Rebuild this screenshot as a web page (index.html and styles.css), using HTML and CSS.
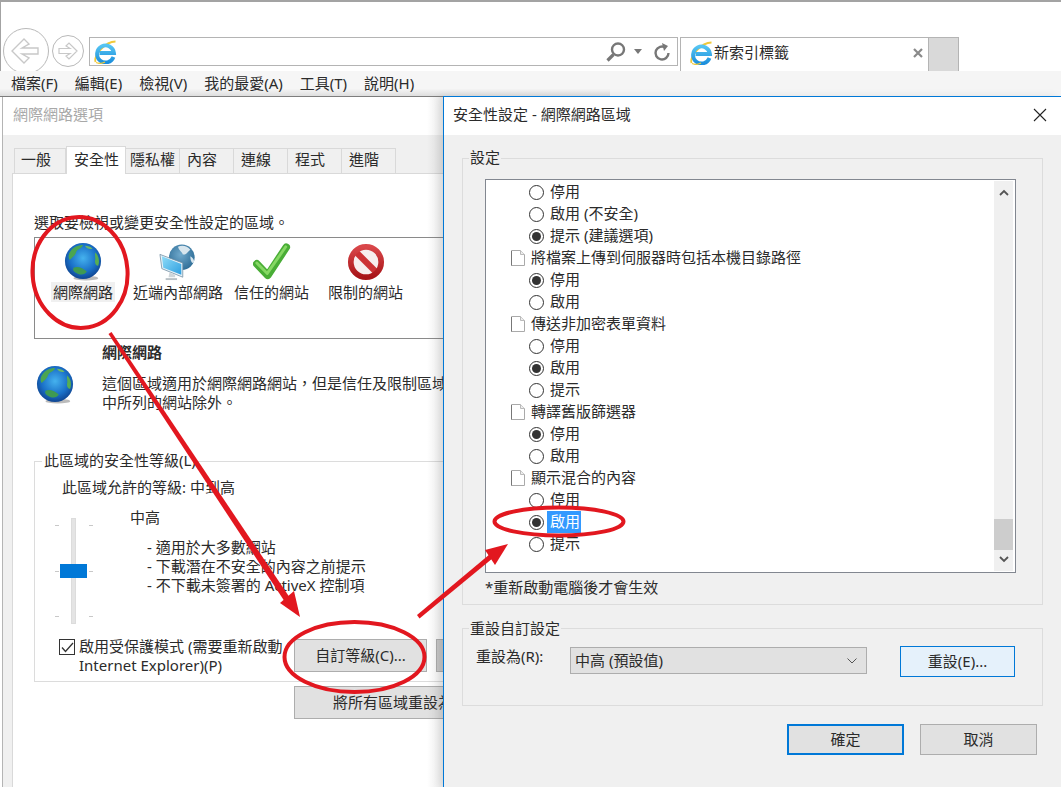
FILE: index.html
```html
<!DOCTYPE html>
<html lang="zh-Hant">
<head>
  <meta charset="UTF-8">
  <title>網際網路選項</title>
  <link rel="stylesheet" href="styles.css">
</head>
<body>
  <svg class="defs" width="0" height="0">
    <defs>
      <radialGradient id="sea" cx="0.5" cy="0.42" r="0.62">
        <stop offset="0" stop-color="#45b2ee"/>
        <stop offset="0.6" stop-color="#1a70c8"/>
        <stop offset="1" stop-color="#0d3c86"/>
      </radialGradient>
      <radialGradient id="sea2" cx="0.45" cy="0.4" r="0.65">
        <stop offset="0" stop-color="#6fa9cc"/>
        <stop offset="1" stop-color="#2b6a94"/>
      </radialGradient>
      <linearGradient id="ie" x1="0" y1="0" x2="0" y2="1">
        <stop offset="0" stop-color="#55c4f2"/>
        <stop offset="1" stop-color="#1c8fdc"/>
      </linearGradient>
      <linearGradient id="screen" x1="0" y1="0" x2="1" y2="1">
        <stop offset="0" stop-color="#8fdcf8"/>
        <stop offset="1" stop-color="#2e9fe0"/>
      </linearGradient>
      <linearGradient id="ring" x1="0" y1="0" x2="0" y2="1">
        <stop offset="0" stop-color="#d9474a"/>
        <stop offset="1" stop-color="#a81418"/>
      </linearGradient>
      <symbol id="ico-ie" viewBox="0 0 24 24">
        <path d="M2.500 22C.5 16 12 1.500 22.500 1.500" fill="none" stroke="#f0c93a" stroke-width="1.800"/>
        <path d="M20.500 17A8.500 8.500 0 1 1 21 13H6.500" fill="none" stroke="url(#ie)" stroke-width="3.800"/>
        <path d="M3 22.500C6 24 9 23.500 12 22" fill="none" stroke="#f0c93a" stroke-width="1.300"/>
      </symbol>
      <symbol id="ico-globe" viewBox="0 0 40 40">
        <ellipse cx="23" cy="37" rx="13" ry="2.500" fill="#bbb"/>
        <circle cx="20" cy="19" r="19" fill="url(#sea)"/>
        <path d="M6 10C9 4 15 2 20 2C19 6 14 6 13 9C12 13 9 15 6 18C4 15 5 12 6 10Z" fill="#4ba551"/>
        <path d="M33 10C36 13 38 18 36 24C33 24 32 20 33 17C33 14 32 12 33 10Z" fill="#57ad53"/>
        <path d="M10 26C14 24 20 26 24 30C22 34 16 34 12 31C10 30 9 28 10 26Z" fill="#3f9a52"/>
        <path d="M22 3C25 3 28 4 30 6C27 7 24 6 22 3Z" fill="#6db865"/>
      </symbol>
      <symbol id="ico-intranet" viewBox="0 0 40 40">
        <circle cx="24" cy="15" r="13.500" fill="url(#sea2)"/>
        <path d="M20 4C24 2 30 3 33 7C30 9 29 13 25 12C24 9 21 8 20 4Z" fill="#d8e6ee"/>
        <path d="M33 14C35 15 37 17 37 20C35 23 33 19 33 14Z" fill="#d8e6ee"/>
        <path d="M1 12L25 21V36L3 27Z" fill="#e8f2f8" stroke="#6d8ba0" stroke-width="0.800"/>
        <path d="M3 14L23.500 22V33.500L4.500 26Z" fill="url(#screen)"/>
        <path d="M11 31L17 33.500V36L10 36Z" fill="#cfd6da"/>
        <path d="M7 37H19V39H7Z" fill="#b8c0c5"/>
      </symbol>
      <symbol id="ico-check" viewBox="0 0 40 40">
        <path d="M4 22L15.500 34L35 4.500" fill="none" stroke="#49ad36" stroke-width="8" stroke-linecap="round" stroke-linejoin="round"/>
        <path d="M4 21L15 32L34.500 4" fill="none" stroke="#86d864" stroke-width="3" stroke-linecap="round" stroke-linejoin="round"/>
      </symbol>
      <symbol id="ico-noentry" viewBox="0 0 40 40">
        <circle cx="20" cy="20" r="14" fill="#f7eeee"/>
        <path d="M10 10L30 30" stroke="#cc3235" stroke-width="6.500"/>
        <circle cx="20" cy="20" r="16" fill="none" stroke="url(#ring)" stroke-width="6"/>
      </symbol>
      <symbol id="ico-doc" viewBox="0 0 14 16">
        <path d="M.5 .5H9.500L13.500 4.500V15.500H.5Z" fill="#fff" stroke="#aaa"/>
        <path d="M9.500 .5V4.500H13.500" fill="#eee" stroke="#bbb"/>
        <path d="M.5 1V15.500" stroke="#777"/>
      </symbol>
    </defs>
  </svg>

  <div class="screen">
    <div class="browser-top">
      <div class="toolbar">
        <button class="nav-btn nav-back">
          <svg width="30" height="26" viewBox="0 0 30 26"><path d="M1 13L13 1L18 6L11 10H27V16H11L18 20L13 25Z" fill="none" stroke="#c8c8c8" stroke-width="1.400"/></svg>
        </button>
        <button class="nav-btn nav-forward">
          <svg width="20" height="18" viewBox="0 0 20 18"><path d="M19 9L11 1L8 4L12 6.500H1V11.500H12L8 14L11 17Z" fill="none" stroke="#c8c8c8" stroke-width="1.200"/></svg>
        </button>
        <div class="address">
          <svg class="ie-icon" width="24" height="24"><use href="#ico-ie"/></svg>
          <div class="address-spacer"></div>
          <svg width="20" height="20" viewBox="0 0 20 20"><circle cx="12" cy="7.500" r="6" fill="none" stroke="#777" stroke-width="2.400"/><path d="M7.500 12.500L1.500 18.500" stroke="#777" stroke-width="3.200"/></svg>
          <span class="caret"></span>
          <svg class="refresh" width="18" height="20" viewBox="0 0 18 20"><path d="M12.500 5.500A6.500 6.500 0 1 0 15.500 11" fill="none" stroke="#777" stroke-width="2.400"/><path d="M9 1L15 4L11 9Z" fill="#777"/></svg>
        </div>
        <div class="tab-new">
          <svg class="ie-icon" width="24" height="24"><use href="#ico-ie"/></svg>
          <span class="tab-new-title">新索引標籤</span>
          <svg class="tab-close" width="10" height="10" viewBox="0 0 10 10"><path d="M1 1L9 9M9 1L1 9" stroke="#8a8a8a" stroke-width="2.200"/></svg>
        </div>
        <div class="tab-add"></div>
      </div>
      <div class="menubar">
        <span class="menu-item">檔案(F)</span>
        <span class="menu-item">編輯(E)</span>
        <span class="menu-item">檢視(V)</span>
        <span class="menu-item">我的最愛(A)</span>
        <span class="menu-item">工具(T)</span>
        <span class="menu-item">說明(H)</span>
      </div>
    </div>

    <div class="dialogs">
      <div class="options-dialog">
        <div class="titlebar titlebar-off">網際網路選項</div>
        <div class="options-body">
          <div class="tabs">
            <span class="tab">一般</span>
            <span class="tab tab-active">安全性</span>
            <span class="tab tab-narrow">隱私權</span>
            <span class="tab">內容</span>
            <span class="tab">連線</span>
            <span class="tab">程式</span>
            <span class="tab tab-last">進階</span>
          </div>
          <div class="tab-panel">
            <div class="zone-prompt">選取要檢視或變更安全性設定的區域。</div>
            <div class="zones">
              <div class="zone zone-internet">
                <svg width="38" height="40"><use href="#ico-globe"/></svg>
                <span class="zone-label zone-label-on">網際網路</span>
              </div>
              <div class="zone zone-intranet">
                <svg width="38" height="40"><use href="#ico-intranet"/></svg>
                <span class="zone-label">近端內部網路</span>
              </div>
              <div class="zone zone-trusted">
                <svg width="38" height="40"><use href="#ico-check"/></svg>
                <span class="zone-label">信任的網站</span>
              </div>
              <div class="zone zone-restricted">
                <svg width="38" height="40"><use href="#ico-noentry"/></svg>
                <span class="zone-label">限制的網站</span>
              </div>
            </div>
            <div class="zone-info">
              <svg class="zone-info-icon" width="38" height="40"><use href="#ico-globe"/></svg>
              <div class="zone-info-text">
                <div class="zone-info-title">網際網路</div>
                <div>這個區域適用於網際網路網站，但是信任及限制區域</div>
                <div>中所列的網站除外。</div>
              </div>
            </div>
            <fieldset class="level-group">
              <legend>此區域的安全性等級(L)</legend>
              <div class="level-allowed">此區域允許的等級: 中到高</div>
              <div class="level-row">
                <div class="slider">
                  <span class="slider-track"></span>
                  <span class="slider-tick tick-a"></span>
                  <span class="slider-tick tick-b"></span>
                  <span class="slider-tick tick-c"></span>
                  <span class="slider-thumb"></span>
                </div>
                <div class="level-text">
                  <div class="level-name">中高</div>
                  <ul class="level-list">
                    <li>- 適用於大多數網站</li>
                    <li>- 下載潛在不安全的內容之前提示</li>
                    <li>- 不下載未簽署的 ActiveX 控制項</li>
                  </ul>
                </div>
              </div>
              <div class="protect-row">
                <span class="check-box">
                  <svg width="13" height="11" viewBox="0 0 13 11"><path d="M1 5.500L4.500 9.500L12 1" fill="none" stroke="#333" stroke-width="1.300"/></svg>
                </span>
                <div class="protect-label">啟用受保護模式 (需要重新啟動<br>Internet Explorer)(P)</div>
                <button class="win-btn level-btn">自訂等級(C)...</button>
                <button class="win-btn level-btn level-btn-off"></button>
              </div>
            </fieldset>
            <button class="win-btn reset-all">將所有區域重設為預設等級(D)</button>
          </div>
        </div>
      </div>

      <div class="security-dialog">
        <div class="titlebar">
          <span>安全性設定 - 網際網路區域</span>
          <svg class="close-x" width="14" height="14" viewBox="0 0 14 14"><path d="M1 1L13 13M13 1L1 13" stroke="#222" stroke-width="1.100"/></svg>
        </div>
        <div class="security-body">
          <fieldset class="settings-group">
            <legend>設定</legend>
            <div class="settings-list">
              <div class="settings-rows">
                <div class="row"><span class="radio"></span>停用</div>
                <div class="row"><span class="radio"></span>啟用 (不安全)</div>
                <div class="row"><span class="radio radio-on"></span>提示 (建議選項)</div>
                <div class="row row-head"><svg width="14" height="16"><use href="#ico-doc"/></svg>將檔案上傳到伺服器時包括本機目錄路徑</div>
                <div class="row"><span class="radio radio-on"></span>停用</div>
                <div class="row"><span class="radio"></span>啟用</div>
                <div class="row row-head"><svg width="14" height="16"><use href="#ico-doc"/></svg>傳送非加密表單資料</div>
                <div class="row"><span class="radio"></span>停用</div>
                <div class="row"><span class="radio radio-on"></span>啟用</div>
                <div class="row"><span class="radio"></span>提示</div>
                <div class="row row-head"><svg width="14" height="16"><use href="#ico-doc"/></svg>轉譯舊版篩選器</div>
                <div class="row"><span class="radio radio-on"></span>停用</div>
                <div class="row"><span class="radio"></span>啟用</div>
                <div class="row row-head"><svg width="14" height="16"><use href="#ico-doc"/></svg>顯示混合的內容</div>
                <div class="row"><span class="radio"></span>停用</div>
                <div class="row"><span class="radio radio-on"></span><span class="row-selected">啟用</span></div>
                <div class="row"><span class="radio"></span>提示</div>
              </div>
              <div class="scrollbar">
                <svg width="10" height="7" viewBox="0 0 10 7"><path d="M1 6L5 2L9 6" fill="none" stroke="#555" stroke-width="1.800"/></svg>
                <span class="scroll-thumb"></span>
                <svg width="10" height="7" viewBox="0 0 10 7"><path d="M1 1L5 5L9 1" fill="none" stroke="#555" stroke-width="1.800"/></svg>
              </div>
            </div>
            <div class="settings-note">*重新啟動電腦後才會生效</div>
          </fieldset>
          <fieldset class="reset-group">
            <legend>重設自訂設定</legend>
            <div class="reset-row">
              <label class="reset-label">重設為(R):</label>
              <div class="combo">
                <span>中高 (預設值)</span>
                <svg width="10" height="6" viewBox="0 0 10 6"><path d="M.5 .5L5 5L9.500 .5" fill="none" stroke="#555"/></svg>
              </div>
              <button class="win-btn reset-btn">重設(E)...</button>
            </div>
          </fieldset>
          <div class="dialog-actions">
            <button class="win-btn action-btn action-default">確定</button>
            <button class="win-btn action-btn">取消</button>
          </div>
        </div>
      </div>
    </div>

    <svg class="marks" width="1061" height="787" viewBox="0 0 1061 787">
      <g fill="none" stroke="#e2171f" stroke-width="4">
        <ellipse cx="80" cy="272.500" rx="47.500" ry="55.500" transform="rotate(-4 80 272)"/>
        <ellipse cx="354.500" cy="657" rx="70" ry="35"/>
        <ellipse cx="559" cy="521.500" rx="64.500" ry="14"/>
      </g>
      <path d="M108.500 334L111.500 332L290 598L285 602Z" fill="#e2171f"/>
      <path d="M300 617L280 603L294 591Z" fill="#e2171f"/>
      <path d="M417 615L419.500 618.500L493 558L490 554Z" fill="#e2171f"/>
      <path d="M508 544L485 550L495 565Z" fill="#e2171f"/>
    </svg>
  </div>
</body>
</html>
```

FILE: styles.css
```css
* {
  box-sizing: border-box;
}
html, body {
  margin: 0;
  padding: 0;
  background: #fff;
}
body {
  font-family: "Noto Sans", "Noto Sans CJK TC", sans-serif;
  font-size: 15px;
  font-weight: 400;
  line-height: 19px;
  color: #2b2b2b;
}
button {
  font: inherit;
  color: inherit;
}
.defs {
  position: absolute;
}
.screen {
  position: relative;
  width: 1061px;
  height: 787px;
  overflow: hidden;
  background: #fff;
}

/* browser chrome */
.browser-top {
  height: 97px;
  border-top: 2px solid #a3a3a3;
  border-left: 1px solid #a3a3a3;
}
.toolbar {
  display: flex;
  align-items: flex-start;
  height: 69px;
  overflow: hidden;
  padding-top: 26px;
  padding-left: 2px;
}
.nav-btn {
  display: flex;
  align-items: center;
  justify-content: center;
  padding: 0;
  background: #fff;
  border: 1px solid #b9b9b9;
  border-radius: 50%;
}
.nav-back {
  width: 46px;
  height: 46px;
  flex: none;
}
.nav-forward {
  width: 32px;
  height: 32px;
  flex: none;
  margin: 7px 0 0 3px;
}
.address {
  display: flex;
  align-items: center;
  width: 589px;
  height: 29px;
  margin: 9px 0 0 5px;
  padding: 0 6px 0 3px;
  border: 1px solid #b4b4b4;
}
.address-spacer {
  flex: 1;
}
.caret {
  width: 0;
  height: 0;
  margin: 0 11px 0 8px;
  border-left: 4px solid transparent;
  border-right: 4px solid transparent;
  border-top: 5px solid #777;
}
.tab-new {
  display: flex;
  align-items: center;
  width: 249px;
  height: 36px;
  margin: 9px 0 0 2px;
  padding: 0 3px 6px 8px;
  border: 1px solid #b4b4b4;
  border-bottom: 0;
}
.tab-new-title {
  flex: 1;
  margin-left: 1px;
}
.tab-close {
  margin-right: 2px;
}
.tab-add {
  width: 30px;
  height: 36px;
  margin-top: 9px;
  background: #d9d9d9;
  border: 1px solid #b4b4b4;
  border-left: 0;
  border-bottom: 0;
}
.menubar {
  display: flex;
  height: 26px;
  margin-left: -1px;
  padding: 3px 0 0 11px;
  gap: 17px;
  background: linear-gradient(#f6f6f6 70%, #dedede) no-repeat 0 0 / 610px 100%, #f5f5f5;
  border-bottom: 1px solid #7d7d7d;
}

/* dialogs */
.dialogs {
  display: flex;
  height: 690px;
  padding-left: 2px;
}
.titlebar {
  display: flex;
  align-items: center;
  justify-content: space-between;
  height: 38px;
  padding: 0 14px 3px 9px;
  background: #fff;
}
.titlebar-off {
  padding-left: 10px;
  color: #a8a8a8;
}
.options-dialog {
  position: relative;
  flex: none;
  width: 441px;
  overflow: hidden;
  border-left: 1px solid #b4b4b4;
}
.options-dialog::after {
  content: "";
  position: absolute;
  top: 0;
  right: 0;
  bottom: 0;
  width: 16px;
  background: linear-gradient(to right, rgba(120, 120, 120, 0), rgba(120, 120, 120, 0.16));
}
.options-body {
  height: 652px;
  padding: 10px 0 0 9px;
  background: #f0f0f0;
}
.tabs {
  display: flex;
  align-items: flex-end;
  height: 28px;
  padding-left: 2px;
}
.tab {
  width: 54px;
  height: 25px;
  padding-left: 7px;
  background: #f0f0f0;
  border: 1px solid #d9d9d9;
  border-bottom: 0;
  border-left-width: 0;
  line-height: 21px;
}
.tab:first-child {
  width: 52px;
  padding-left: 6px;
  border-left-width: 1px;
}
.tab-active {
  position: relative;
  width: 60px;
  height: 28px;
  margin-bottom: -1px;
  padding-left: 7px;
  background: #fff;
  border-left-width: 1px;
  line-height: 25px;
}
.tab-narrow {
  padding-left: 4px;
}
.tab-last {
  border-right-width: 1px;
}
.tab-panel {
  width: 560px;
  height: 620px;
  padding: 38px 0 0 21px;
  background: #fff;
  border-top: 1px solid #d9d9d9;
  border-left: 1px solid #d9d9d9;
}
.zone-prompt {
  height: 20px;
  line-height: 21px;
}
.zones {
  display: flex;
  height: 102px;
  margin-top: 5px;
  border: 1px solid #8a8a8a;
}
.zone {
  display: flex;
  flex-direction: column;
  align-items: center;
  margin-top: 4px;
}
.zone-label {
  height: 20px;
  padding: 0 2px;
  line-height: 20px;
  white-space: nowrap;
}
.zone-label-on {
  background: #f0f0f0;
}
.zone-internet {
  margin-left: 16px;
}
.zone-intranet {
  margin-left: 16px;
}
.zone-trusted {
  margin-left: 7px;
}
.zone-restricted {
  margin-left: 15px;
}
.zone-info {
  display: flex;
  margin-top: 4px;
}
.zone-info-icon {
  margin: 22px 0 0 2px;
}
.zone-info-text {
  margin-left: 28px;
}
.zone-info-title {
  margin-bottom: 12px;
  font-weight: 700;
}
.level-group {
  width: 525px;
  margin: 39px 0 0;
  padding: 6px 0 6px 0;
  border: 1px solid #dcdcdc;
}
.level-group legend {
  margin-left: 7px;
  padding: 0 2px 2px;
  line-height: 18px;
}
.level-allowed {
  height: 20px;
  padding-left: 27px;
  line-height: 20px;
}
.level-row {
  display: flex;
  margin-top: 11px;
}
.slider {
  position: relative;
  flex: none;
  width: 38px;
  height: 106px;
  margin: 10px 0 0 20px;
}
.slider-track {
  position: absolute;
  left: 16px;
  top: 0;
  width: 5px;
  height: 106px;
  background: #e4e4e4;
  border: 1px solid #dcdcdc;
}
.slider-tick {
  position: absolute;
  left: 0;
  width: 38px;
  height: 1px;
  background: linear-gradient(to right, #c8c8c8 4px, transparent 4px, transparent 34px, #c8c8c8 34px);
}
.tick-a {
  top: 7px;
}
.tick-b {
  top: 53px;
}
.tick-c {
  top: 98px;
}
.slider-thumb {
  position: absolute;
  left: 5px;
  top: 46px;
  width: 27px;
  height: 14px;
  background: #0078d7;
}
.level-text {
  margin-left: 37px;
}
.level-name {
  height: 20px;
  line-height: 18px;
}
.level-list {
  margin: 10px 0 0 17px;
  padding: 0;
  list-style: none;
  white-space: nowrap;
}
.protect-row {
  display: flex;
  align-items: flex-start;
  margin-top: 13px;
}
.check-box {
  display: flex;
  align-items: center;
  justify-content: center;
  flex: none;
  width: 16px;
  height: 16px;
  margin: 2px 0 0 24px;
  background: #fff;
  border: 1px solid #333;
}
.protect-label {
  flex: none;
  width: 215px;
  margin-left: 4px;
  white-space: nowrap;
}
.win-btn {
  padding: 0;
  background: #e1e1e1;
  border: 1px solid #adadad;
  white-space: nowrap;
}
.level-btn {
  flex: none;
  width: 133px;
  height: 33px;
  margin-top: 2px;
}
.level-btn-off {
  margin-left: 9px;
  background: #ccc;
}
.reset-all {
  display: block;
  width: 300px;
  height: 33px;
  margin: 4px 0 0 260px;
  padding-left: 38px;
  text-align: left;
}

.security-dialog {
  position: relative;
  flex: none;
  width: 618px;
  height: 691px;
  margin-top: -1px;
  border-top: 1px solid #0078d7;
  border-left: 1px solid #0078d7;
  box-shadow: -4px 0 8px rgba(0, 0, 0, 0.08);
}
.security-dialog .titlebar {
  padding-bottom: 3px;
}
.security-body {
  height: 652px;
  padding: 13px 18px 0 18px;
  background: #f0f0f0;
}
.security-body fieldset {
  margin: 0;
  border: 1px solid #dcdcdc;
}
.security-body legend {
  margin-left: 6px;
  padding: 0 1px;
  line-height: 20px;
}
.security-body .settings-group legend {
  padding-bottom: 2px;
  line-height: 18px;
}
.settings-group {
  padding: 11px 26px 6px 0;
}
.settings-list {
  display: flex;
  justify-content: space-between;
  height: 394px;
  margin-left: 22px;
  padding: 1px 2px 1px 0;
  overflow: hidden;
  background: #fff;
  border: 1px solid #828790;
}
.settings-rows {
  flex: 1;
}
.row {
  display: flex;
  align-items: center;
  height: 22px;
  padding-bottom: 2px;
  padding-left: 43px;
  white-space: nowrap;
}
.row-head {
  padding-left: 25px;
}
.row-head svg {
  margin-top: 2px;
  margin-right: 6px;
}
.radio {
  position: relative;
  flex: none;
  width: 15px;
  height: 15px;
  margin-top: 2px;
  margin-right: 6px;
  background: #fff;
  border: 1px solid #333;
  border-radius: 50%;
}
.radio-on::after {
  content: "";
  position: absolute;
  left: 2px;
  top: 2px;
  width: 9px;
  height: 9px;
  background: #333;
  border-radius: 50%;
}
.row-selected {
  align-self: flex-start;
  height: 22px;
  margin-left: -3px;
  padding: 0 1px 0 3px;
  line-height: 20px;
  background: #3399ff;
  color: #fff;
}
.scrollbar {
  position: relative;
  display: flex;
  flex-direction: column;
  align-items: center;
  justify-content: space-between;
  flex: none;
  width: 19px;
  padding-top: 8px;
  padding-bottom: 8px;
  background: #f0f0f0;
}
.scroll-thumb {
  position: absolute;
  left: 0;
  top: 338px;
  width: 19px;
  height: 31px;
  background: #cdcdcd;
}
.settings-note {
  height: 20px;
  margin-top: 5px;
  margin-left: 22px;
  line-height: 19px;
}
.security-body .reset-group {
  margin-top: 13px;
  padding: 8px 0 28px 0;
}
.reset-row {
  display: flex;
  align-items: flex-start;
  padding-left: 13px;
}
.reset-label {
  flex: none;
  width: 94px;
  line-height: 20px;
}
.combo {
  display: flex;
  align-items: center;
  justify-content: space-between;
  flex: none;
  width: 297px;
  height: 27px;
  margin-top: 1px;
  padding: 0 9px 0 4px;
  background: #e1e1e1;
  border: 1px solid #adadad;
}
.reset-btn {
  flex: none;
  width: 115px;
  height: 31px;
  margin-left: 33px;
  background: #e5f1fb;
  border-color: #0078d7;
}
.dialog-actions {
  display: flex;
  justify-content: flex-end;
  gap: 16px;
  margin-top: 18px;
  margin-right: 6px;
}
.action-btn {
  width: 117px;
  height: 31px;
}
.action-default {
  border: 2px solid #0078d7;
}

/* red annotations drawn over the screenshot */
.marks {
  position: absolute;
  left: 0;
  top: 0;
  pointer-events: none;
}
```
